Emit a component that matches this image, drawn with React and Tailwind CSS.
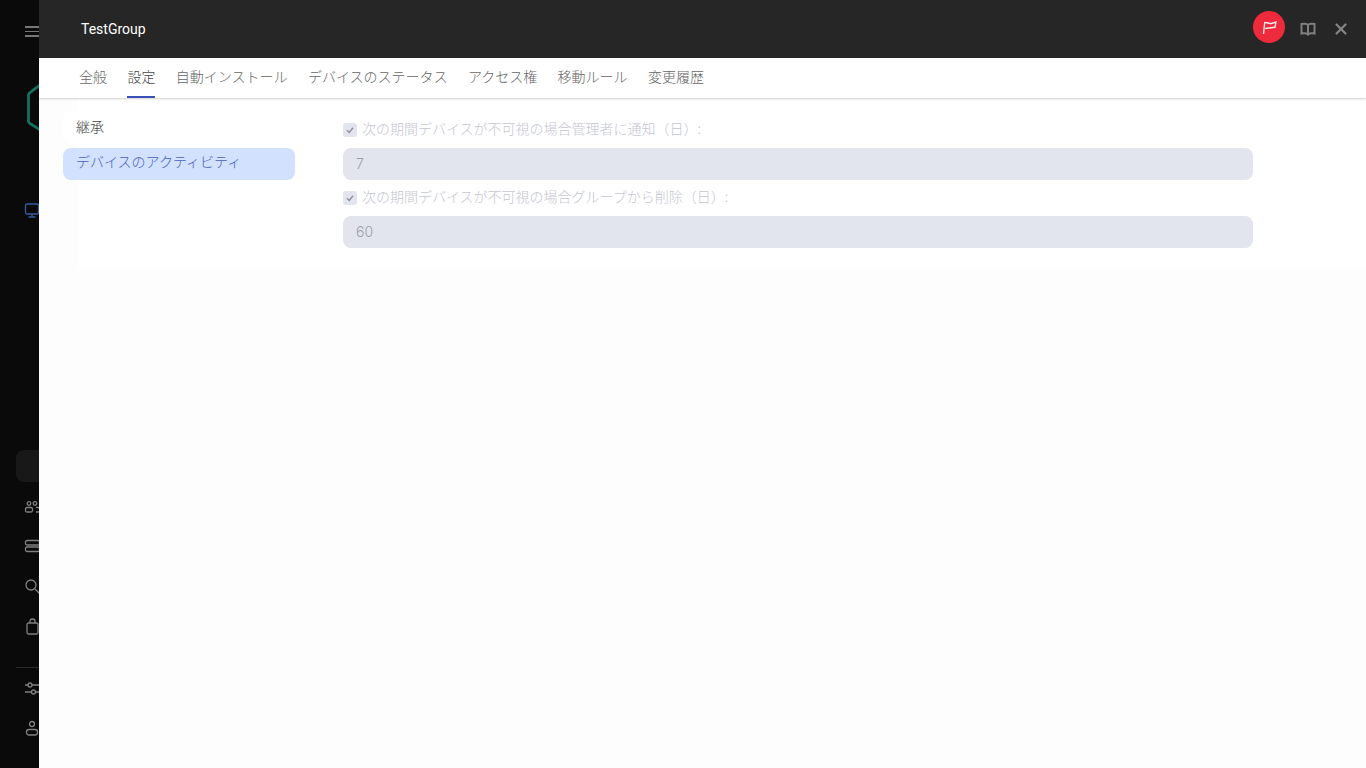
import React from "react";
import { X } from "lucide-react";

const cjk = "font-['Noto_Sans_CJK_JP','Noto_Sans',sans-serif]";

const tabs = ["全般", "設定", "自動インストール", "デバイスのステータス", "アクセス権", "移動ルール", "変更履歴"];

function RailIcon({ className, children }) {
  return (
    <svg width="20" height="20" viewBox="0 0 20 20" fill="none" stroke="currentColor" strokeWidth="1.3" className={className}>
      {children}
    </svg>
  );
}

function Rail() {
  return (
    <aside className="w-[39px] shrink-0 overflow-hidden bg-[#0a0a0a] text-[#808080]">
      <div className="w-[80px] h-[768px] pl-[25px]">
        {/* hamburger */}
        <div className="pt-[26px] flex flex-col gap-[3px] w-[16px]">
          <div className="h-[1.5px] bg-[#777]" />
          <div className="h-[1.5px] bg-[#777]" />
          <div className="h-[1.5px] bg-[#777]" />
        </div>
        {/* logo */}
        <svg width="14" height="50" viewBox="0 0 14 50" fill="none" className="mt-[44px] ml-[2px]">
          <path d="M13.5 3.5 L3 11.5 Q1.5 12.5 1.5 14 L1.5 40 Q1.5 41.5 3 42.5 L13.5 49" stroke="#14705f" strokeWidth="2.8" />
        </svg>
        {/* monitor */}
        <RailIcon className="mt-[70px] -ml-[1px] text-[#3a5a9c]">
          <rect x="1.5" y="3" width="13" height="10" rx="1.5" />
          <path d="M8 13v2.5M4.5 16h7" />
        </RailIcon>
        {/* active item */}
        <div className="mt-[229px] -ml-[9px] w-[60px] h-[32px] rounded-lg bg-[#181818]" />
        <RailIcon className="mt-[18px] -ml-[1px]">
          <circle cx="5" cy="3.5" r="1.8" />
          <circle cx="11" cy="3.5" r="1.8" />
          <rect x="1.5" y="7.5" width="7" height="4.5" rx="1.5" />
          <path d="M12 7.5h2a2 2 0 0 1 0 4.5h-2" />
        </RailIcon>
        <RailIcon className="mt-[19px] -ml-[1px]">
          <rect x="1.5" y="1.5" width="14" height="4.5" rx="1.5" />
          <rect x="1.5" y="8" width="14" height="4.5" rx="1.5" />
        </RailIcon>
        <RailIcon className="mt-[19px] -ml-[1px]">
          <circle cx="7" cy="7" r="5" />
          <path d="M11 11l5 5" />
        </RailIcon>
        <RailIcon className="mt-[20px] -ml-[1px]">
          <rect x="3" y="5" width="11" height="11" rx="1.5" />
          <path d="M6 5V3.5a2.5 2.5 0 0 1 5 0V5" />
        </RailIcon>
        <div className="mt-[29px] -ml-[9px] w-[60px] h-px bg-[#2a2a2a]" />
        <RailIcon className="mt-[12px] -ml-[1px]">
          <path d="M1 5h3.5M8 5h10M1 12h6.5M11 12h6" />
          <circle cx="6" cy="5" r="2" />
          <circle cx="9.5" cy="12" r="2" />
        </RailIcon>
        <RailIcon className="mt-[20px] -ml-[1px]">
          <circle cx="8" cy="4" r="2.5" />
          <rect x="2.5" y="9.5" width="11" height="5.5" rx="2.5" />
        </RailIcon>
      </div>
    </aside>
  );
}

function Header() {
  return (
    <header className="h-[58px] shrink-0 bg-[#262626] flex items-center pl-[42px] pr-[16px]">
      <span className="font-['Roboto',sans-serif] text-[14px] text-white">TestGroup</span>
      <div className="ml-auto flex items-center">
        <div className="w-[32px] h-[32px] rounded-full bg-[#ee2a3c] flex items-center justify-center -mt-[4px]">
          <svg width="16" height="18" viewBox="0 0 16 18" fill="none" stroke="#fbe9ea" strokeWidth="1.4">
            <path d="M2.5 16 L3.7 4.7 C6 3.8 8 6 10.5 5.5 L15 4 L14 9.3 L10 9.8 C8 10.2 6 9.8 4.3 10.7" />
          </svg>
        </div>
        <svg width="16" height="14" viewBox="0 0 16 14" fill="none" stroke="#808080" strokeWidth="2" className="ml-[15px]">
          <path d="M8 3 C6.5 1.5 3 1.5 1.5 2 V11.5 C3 11 6.5 11 8 12.5 C9.5 11 13 11 14.5 11.5 V2 C13 1.5 9.5 1.5 8 3 Z M8 3 V12.5" />
        </svg>
        <X size={18} strokeWidth={3} className="ml-[16px] text-[#858585]" />
      </div>
    </header>
  );
}

function Tabs() {
  return (
    <nav className={`h-[40px] shrink-0 bg-white flex gap-[20.4px] pl-[40px] shadow-[0_1px_2px_rgba(0,0,0,0.18)] relative ${cjk}`}>
      {tabs.map((tab, i) => (
        <div
          key={tab}
          className={`h-full flex items-center pb-[2px] text-[14px] font-light border-b-2 ${
            i === 1 ? "border-[#3b4fb8] text-[#444]" : "border-transparent text-[#666]"
          }`}
        >
          {tab}
        </div>
      ))}
    </nav>
  );
}

function SettingField({ label, value }) {
  return (
    <div>
      <label className="flex items-center gap-[5px] h-[20px] mb-[8px]">
        <span className="w-[14px] h-[14px] rounded-[3px] bg-[#e2e5ed] flex items-center justify-center">
          <svg width="10" height="10" viewBox="0 0 10 10" fill="none" stroke="#8b8f9c" strokeWidth="1.4">
            <path d="M2 5.2 L4.2 7.4 L8 2.8" />
          </svg>
        </span>
        <span className="text-[14px] font-light text-[#c4c6cf] -mt-[4px]">{label}</span>
      </label>
      <div className="w-[910px] h-[32px] rounded-lg bg-[#e2e5ed] flex items-center pl-[13px] pb-[1px] font-['Inter',sans-serif] text-[14px] font-light text-[#9b9eab]">
        {value}
      </div>
    </div>
  );
}

export default function App() {
  return (
    <div className="flex h-screen overflow-hidden bg-[#0a0a0a]">
      <Rail />
      <main className="flex-1 flex flex-col bg-[#fdfdfd] min-w-0">
        <Header />
        <Tabs />
        <section className={`h-[170px] flex bg-white border-l-[39px] border-[#fdfdfd] ${cjk}`}>
          <ul className="-ml-[15px] w-[232px] pt-[13px] flex flex-col gap-[5px] text-[14px] font-light shrink-0">
            <li className="h-[32px] rounded-lg bg-white flex items-center pl-[13px] pb-[1px] text-[#444]">継承</li>
            <li className="h-[32px] rounded-lg bg-[#d2e1fe] flex items-center pl-[13px] pb-[5px] text-[#4a5fc0]">
              デバイスのアクティビティ
            </li>
          </ul>
          <div className="ml-[48px] pt-[22px] flex flex-col gap-[8px]">
            <SettingField label="次の期間デバイスが不可視の場合管理者に通知（日）:" value="7" />
            <SettingField label="次の期間デバイスが不可視の場合グループから削除（日）:" value="60" />
          </div>
        </section>
      </main>
    </div>
  );
}
